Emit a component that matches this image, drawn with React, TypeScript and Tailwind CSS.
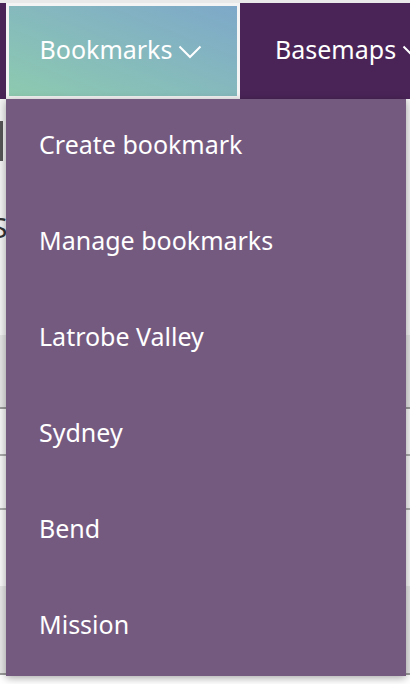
import { useState } from "react";

const bookmarks = [
  "Create bookmark",
  "Manage bookmarks",
  "Latrobe Valley",
  "Sydney",
  "Bend",
  "Mission",
];

const Chevron = () => (
  <svg width="24" height="14" viewBox="0 0 24 14" fill="none" className="ml-[6px] mt-[3px] shrink-0">
    <path d="M1.5 1.5 L12 12 L22.5 1.5" stroke="white" strokeWidth="2" />
  </svg>
);

const App = () => {
  const [open] = useState(true);

  return (
    <div
      className="relative w-[410px] h-[684px] overflow-hidden bg-white"
      style={{ fontFamily: '"Noto Sans", sans-serif' }}
    >
      <div className="h-[3px] bg-[#e9e9e9]" />
      <nav className="flex h-[96px] bg-[#4a2457] text-white text-[25px]">
        <div className="w-[6px] shrink-0" />
        <button className="flex shrink-0 items-center justify-center w-[234px] border-[3px] border-[#f4f4f4] bg-gradient-to-tr from-[#8dcaaf] to-[#7ea8c9] pr-[4px] pb-[2px]">
          <span>Bookmarks</span>
          <Chevron />
        </button>
        <div className="flex shrink-0 items-center pl-[35px] pb-[2px] whitespace-nowrap">
          <span>Basemaps</span>
          <Chevron />
        </div>
      </nav>

      {/* page behind the menu */}
      <div className="flex flex-col text-[#333]">
        <div className="h-[236px] bg-[#f3f3f3] pt-[22px]">
          <div className="w-[3px] h-[40px] bg-[#555]" />
          <div className="mt-[52px] text-[28px] leading-none -ml-[8px]">S</div>
        </div>
        <div className="h-[74px] bg-[#e4e4e4] border-b-2 border-[#999]" />
        <div className="h-[47px] bg-[#f6f6f6] border-b-2 border-[#aaa]" />
        <div className="h-[54px] bg-[#f6f6f6] border-b-2 border-[#aaa]" />
        <div className="h-[76px] bg-[#f8f8f8]" />
        <div className="h-[89px] bg-[#e6e6e6] border-b-2 border-[#999]" />
      </div>

      {open && (
        <ul className="absolute left-[6px] top-[99px] w-[400px] h-[577px] bg-[#755a80] text-white text-[25px] shadow-[0_2px_8px_rgba(0,0,0,0.35)]">
          {bookmarks.map((b) => (
            <li key={b} className="flex items-center h-[96px] pl-[33px] pb-[4px]">
              {b}
            </li>
          ))}
        </ul>
      )}
    </div>
  );
};

export default App;
